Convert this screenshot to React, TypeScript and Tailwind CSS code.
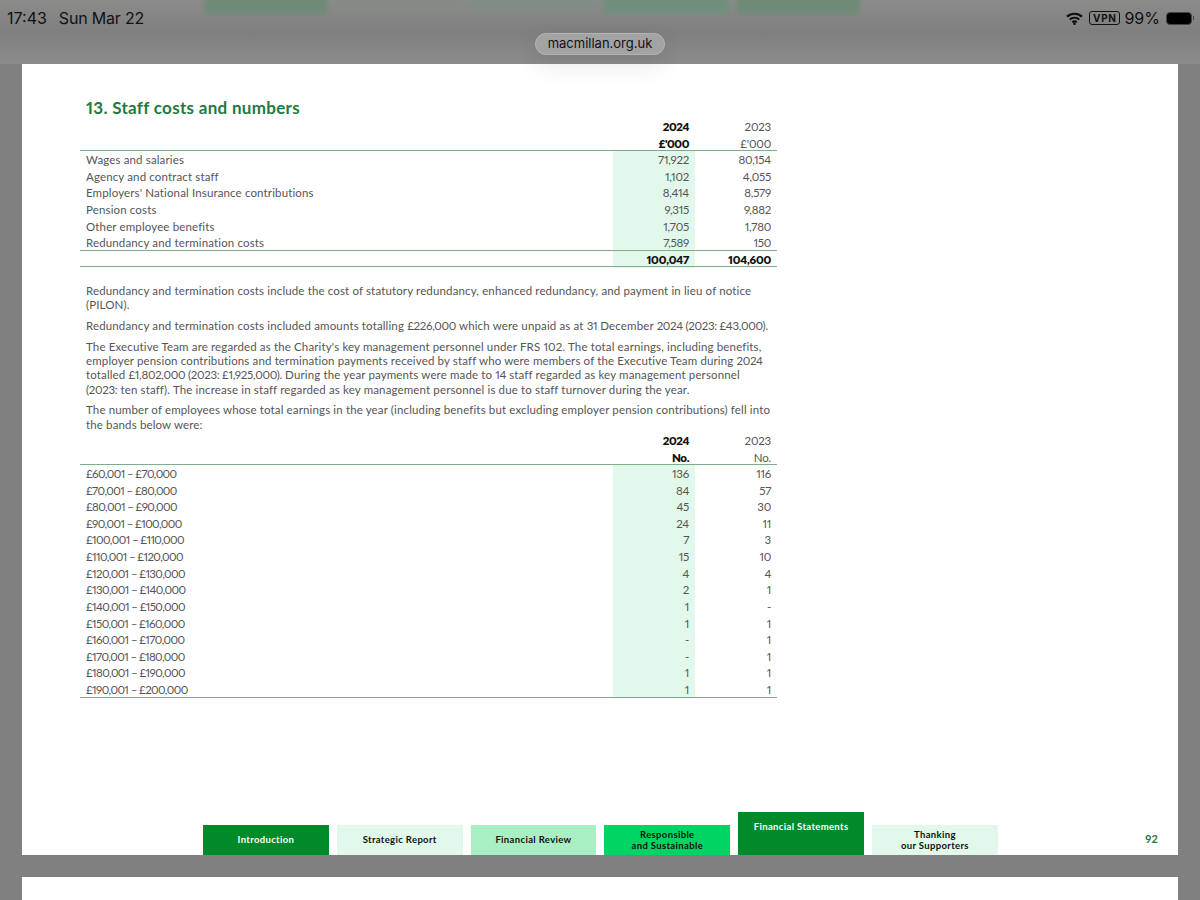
const costRows = [
  ["Wages and salaries", "71,922", "80,154"],
  ["Agency and contract staff", "1,102", "4,055"],
  ["Employers' National Insurance contributions", "8,414", "8,579"],
  ["Pension costs", "9,315", "9,882"],
  ["Other employee benefits", "1,705", "1,780"],
  ["Redundancy and termination costs", "7,589", "150"],
];

const bandRows = [
  ["£60,001 – £70,000", "136", "116"],
  ["£70,001 – £80,000", "84", "57"],
  ["£80,001 – £90,000", "45", "30"],
  ["£90,001 – £100,000", "24", "11"],
  ["£100,001 – £110,000", "7", "3"],
  ["£110,001 – £120,000", "15", "10"],
  ["£120,001 – £130,000", "4", "4"],
  ["£130,001 – £140,000", "2", "1"],
  ["£140,001 – £150,000", "1", "-"],
  ["£150,001 – £160,000", "1", "1"],
  ["£160,001 – £170,000", "-", "1"],
  ["£170,001 – £180,000", "-", "1"],
  ["£180,001 – £190,000", "1", "1"],
  ["£190,001 – £200,000", "1", "1"],
];

const tabs = [
  { label: ["Introduction"], cls: "bg-[#008a2a] text-white h-[30px] justify-center" },
  { label: ["Strategic Report"], cls: "bg-[#e2f8ea] text-[#111] h-[30px] justify-center" },
  { label: ["Financial Review"], cls: "bg-[#a9efc3] text-[#111] h-[30px] justify-center" },
  { label: ["Responsible", "and Sustainable"], cls: "bg-[#00d563] text-[#111] h-[30px] justify-center" },
  { label: ["Financial Statements"], cls: "bg-[#008a2a] text-white h-[43px] justify-start pt-[9px]" },
  { label: ["Thanking", "our Supporters"], cls: "bg-[#e2f8ea] text-[#111] h-[30px] justify-center" },
];

function HeadRow({ a, b }: { a: string; b: string }) {
  return (
    <div className="grid h-[17px] grid-cols-[533px_82px_82px] items-center tracking-[-0.2px]">
      <div />
      <div className="pr-[6px] text-right font-extrabold tracking-[-0.4px] text-[#111]">{a}</div>
      <div className="pr-[6px] text-right">{b}</div>
    </div>
  );
}

function DataRow({ row, band }: { row: string[]; band?: boolean }) {
  return (
    <div className="grid h-[16.64px] grid-cols-[533px_82px_82px] items-center">
      <div className={band ? "pl-[6px] tracking-[-0.6px]" : "pl-[6px]"}>{row[0]}</div>
      <div className="flex h-full items-center justify-end bg-[#e2f8ea] pr-[6px] tracking-[-0.25px]">{row[1]}</div>
      <div className="pr-[6px] text-right tracking-[-0.25px]">{row[2]}</div>
    </div>
  );
}

function Rule({ className = "" }: { className?: string }) {
  return <div className={"relative z-10 h-px bg-[#7fae8e] " + className} />;
}

function Num({ children }: { children: string }) {
  return <span className="tracking-[-0.3px]">{children}</span>;
}

function Wifi() {
  return (
    <svg width="17" height="13" viewBox="0 0 17 13" fill="none" stroke="#0c0c0c" strokeWidth="2.1">
      <path d="M1 4.6c4.3-3.9 10.7-3.9 15 0" />
      <path d="M3.7 7.5c2.8-2.4 6.8-2.4 9.6 0" />
      <path d="M6.3 10.2c1.3-1 3.1-1 4.4 0" />
      <circle cx="8.5" cy="11.7" r="1.2" fill="#0c0c0c" stroke="none" />
    </svg>
  );
}

export default function App() {
  return (
    <div className="flex h-[900px] w-[1200px] flex-col overflow-hidden bg-[#808080] font-['Lato',sans-serif] proportional-nums">
      <div className="relative z-10 h-[64px] w-full bg-gradient-to-b from-[#8b8c8a] via-[#7f7f7f] to-[#8c8c8c]">
        <div className="absolute inset-x-0 top-0 h-[20px] overflow-hidden">
          <div className="ml-[205px] mt-[-6px] flex gap-[8px] blur-[2px]">
            <div className="h-[20px] w-[122px] bg-[#6f8a76]" />
            <div className="h-[20px] w-[126px] bg-[#868a87]" />
            <div className="h-[20px] w-[126px] bg-[#818c84]" />
            <div className="h-[20px] w-[126px] bg-[#6f8f7c]" />
            <div className="h-[20px] w-[122px] bg-[#6f8a76]" />
          </div>
        </div>
        <div className="relative flex h-[36px] items-center justify-between pl-[7px] pr-[6px] font-['Inter',sans-serif] text-[16px] text-[#111]">
          <div className="flex gap-[12px]">
            <span>17:43</span>
            <span className="tracking-[-0.2px]">Sun Mar 22</span>
          </div>
          <div className="flex items-center">
            <Wifi />
            <span className="ml-[6px] rounded-[3px] border border-[#111] px-[3px] text-[10px] font-bold leading-[12px] tracking-[0.6px]">VPN</span>
            <span className="ml-[4px]">99%</span>
            <span className="ml-[6px] h-[13px] w-[26px] rounded-[4px] border border-[#444] bg-black" />
            <span className="ml-px h-[4px] w-px bg-[#444]" />
          </div>
        </div>
        <div className="absolute left-[535px] top-[33px] flex h-[22px] w-[130px] items-center justify-center rounded-full border border-[#b5b5b5] bg-[#a3a3a3] font-['Inter',sans-serif] text-[13px] text-[#111] shadow-[0_10px_24px_rgba(0,0,0,0.1)]">
          macmillan.org.uk
        </div>
      </div>

      <div className="mx-[22px] flex h-[791px] flex-col bg-white pl-[58px] text-[11.5px] tracking-[0.14px] text-[#555]">
        <h1 className="mt-[34px] pl-[6px] text-[17px] font-bold leading-[19.5px] tracking-[0.3px] text-[#1f7a41]">13. Staff costs and numbers</h1>
        <div className="w-[697px]">
          <HeadRow a="2024" b="2023" />
          <HeadRow a="£'000" b="£'000" />
          <Rule className="mt-[-1.5px]" />
          {costRows.map((r) => <DataRow key={r[0]} row={r} />)}
          <Rule className="mt-[-1px]" />
          <div className="grid h-[15px] grid-cols-[533px_82px_82px] items-center font-extrabold tracking-[-0.2px] text-[#111]">
            <div />
            <div className="flex h-full items-center justify-end bg-[#e2f8ea] pr-[6px]">100,047</div>
            <div className="pr-[6px] text-right">104,600</div>
          </div>
          <Rule />
        </div>

        <div className="mt-[17px] flex w-[697px] flex-col gap-[6.5px] pl-[6px] leading-[14.3px]">
          <p>Redundancy and termination costs include the cost of statutory redundancy, enhanced redundancy, and payment in lieu of notice (PILON).</p>
          <p>Redundancy and termination costs included amounts totalling <Num>£226,000</Num> which were unpaid as at <Num>31</Num> December <Num>2024 (2023: £43,000).</Num></p>
          <p>The Executive Team are regarded as the Charity's key management personnel under FRS 102. The total earnings, including benefits, employer pension contributions and termination payments received by staff who were members of the Executive Team during <Num>2024</Num><br />totalled <Num>£1,802,000 (2023: £1,925,000).</Num> During the year payments were made to <Num>14</Num> staff regarded as key management personnel <span className="whitespace-nowrap"><Num>(2023:</Num> ten staff).</span> The increase in staff regarded as key management personnel is due to staff turnover during the year.</p>
          <p>The number of employees whose total earnings in the year (including benefits but excluding employer pension contributions) fell into the bands below were:</p>
        </div>

        <div className="w-[697px]">
          <HeadRow a="2024" b="2023" />
          <HeadRow a="No." b="No." />
          <Rule className="mt-[-2px]" />
          {bandRows.map((r) => <DataRow key={r[0]} row={r} band />)}
          <Rule className="mt-[-1px]" />
        </div>

        <div className="mt-auto flex items-end pl-[123px] pr-[20px]">
          <div className="flex items-end gap-[8px]">
            {tabs.map((t) => (
              <div key={t.label[0]} className={"flex w-[125.8px] flex-col items-center text-[9.5px] font-bold leading-[11.5px] tracking-[0.35px] " + t.cls}>
                {t.label.map((l) => <span key={l}>{l}</span>)}
              </div>
            ))}
          </div>
          <span className="ml-auto mb-[8px] text-[11px] font-bold text-[#1f7a41]">92</span>
        </div>
      </div>

      <div className="mx-[22px] mt-[22px] h-[23px] bg-white" />
    </div>
  );
}
